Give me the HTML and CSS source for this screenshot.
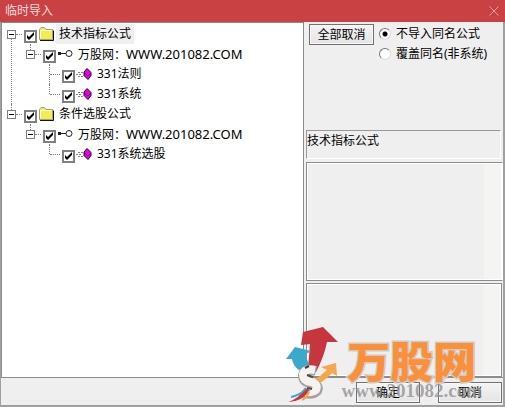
FILE: index.html
```html
<!DOCTYPE html>
<html lang="zh-CN">
<head>
  <meta charset="UTF-8">
  <title>临时导入</title>
  <link rel="stylesheet" href="styles.css">
</head>
<body>

<!-- shared icons -->
<svg class="icon-defs" aria-hidden="true">
  <symbol id="folder" viewBox="0 0 16 14">
    <path d="M1.500 12.500V2.500L3 .5h3.500l1.500 2h6.500v10z" fill="#f2ee50" stroke="#a0a084"/>
    <path d="M2.500 11V3.500H13" stroke="#fffde0" fill="none"/>
    <path d="M2 13.500h13.500V3.500" stroke="#111" fill="none"/>
  </symbol>
  <symbol id="key" viewBox="0 0 16 14">
    <path d="M1 5h3v3H1z" fill="#222"/>
    <path d="M1 6.500h8" stroke="#222"/>
    <circle cx="12" cy="6.500" r="3" fill="#fff" stroke="#222"/>
  </symbol>
  <symbol id="gem" viewBox="0 0 16 14">
    <path d="M2 5.500h5M0 7.500h6M2 9.500h5" stroke="#888" stroke-dasharray="2 1"/>
    <path d="M11 1.500L15 5.500V8.500L12 12.500L8 8.500V5z" fill="#e800e8" stroke="#300030"/>
    <path d="M8 6l4 3 3-3" fill="none" stroke="#600060"/>
  </symbol>
</svg>

<div class="dialog">
  <div class="title-bar">
    <span>临时导入</span>
    <button class="close" aria-label="关闭">
      <svg width="10" height="10" viewBox="0 0 10 10"><path d="M.5.5l9 9M9.500.5l-9 9" stroke="#eba5a5" fill="none"/></svg>
    </button>
  </div>

  <div class="content">
    <ul class="tree">
      <li>
        <div class="row">
          <button class="expander" aria-label="折叠"></button>
          <input type="checkbox" id="n1" checked>
          <svg class="icon"><use href="#folder"/></svg>
          <label for="n1" class="selected">技术指标公式</label>
        </div>
        <ul>
          <li>
            <div class="row">
              <button class="expander" aria-label="折叠"></button>
              <input type="checkbox" id="n2" checked>
              <svg class="icon"><use href="#key"/></svg>
              <label for="n2">万股网：<span class="url">WWW.201082.COM</span></label>
            </div>
            <ul>
              <li>
                <div class="row leaf">
                  <input type="checkbox" id="n3" checked>
                  <svg class="icon"><use href="#gem"/></svg>
                  <label for="n3">331法则</label>
                </div>
              </li>
              <li>
                <div class="row leaf">
                  <input type="checkbox" id="n4" checked>
                  <svg class="icon"><use href="#gem"/></svg>
                  <label for="n4">331系统</label>
                </div>
              </li>
            </ul>
          </li>
        </ul>
      </li>
      <li>
        <div class="row">
          <button class="expander" aria-label="折叠"></button>
          <input type="checkbox" id="n5" checked>
          <svg class="icon"><use href="#folder"/></svg>
          <label for="n5">条件选股公式</label>
        </div>
        <ul>
          <li>
            <div class="row">
              <button class="expander" aria-label="折叠"></button>
              <input type="checkbox" id="n6" checked>
              <svg class="icon"><use href="#key"/></svg>
              <label for="n6">万股网：<span class="url">WWW.201082.COM</span></label>
            </div>
            <ul>
              <li>
                <div class="row leaf">
                  <input type="checkbox" id="n7" checked>
                  <svg class="icon"><use href="#gem"/></svg>
                  <label for="n7">331系统选股</label>
                </div>
              </li>
            </ul>
          </li>
        </ul>
      </li>
    </ul>

    <div class="side">
      <div class="options">
        <button class="btn">全部取消</button>
        <div class="radios">
          <div class="radio"><input type="radio" name="mode" id="skip" checked><label for="skip">不导入同名公式</label></div>
          <div class="radio"><input type="radio" name="mode" id="cover"><label for="cover">覆盖同名(非系统)</label></div>
        </div>
      </div>
      <div class="caption">技术指标公式</div>
      <div class="pane pane-top"></div>
      <div class="pane"></div>
    </div>
  </div>

  <div class="footer">
    <button class="btn">确定</button>
    <button class="btn">取消</button>
  </div>

  <div class="watermark">
    <svg width="56" height="80" viewBox="0 0 56 80">
      <path d="M17 7L37 2L52 17L41 17Q38 32 30 47L22 45L24 19L15 20z" fill="#c5363f"/>
      <path d="M0 34L9 22L25 26L20 29Q21 37 25 42L13 45Q7 41 6 34z" fill="#3aa9cc"/>
      <path d="M27 55Q35 51 41 45L35 42L50 38L51 51L46 48Q38 57 29 60z" fill="#f7a64d"/>
      <path d="M30 46Q19 43 17 50Q17 57 25 58Q34 60 31 66Q26 71 15 67" fill="none" stroke="#a79f99" stroke-width="10"/>
      <path d="M29 45Q19 43 17 49Q17 56 25 57Q33 59 30 65Q25 69 15 66" fill="none" stroke="#f5f2ef" stroke-width="8"/>
      <path d="M19 43l4-2" stroke="#453c3c" stroke-width="2"/>
      <path d="M21 50l6 2M21 63l5 1" stroke="#55494a" stroke-width="2"/>
      <path d="M2 77Q14 73 19 63L24 65Q16 77 2 77z" fill="#c5363f"/>
      <path d="M5 72Q15 70 20 63" fill="none" stroke="#3aa9cc" stroke-width="2"/>
      <path d="M16 75Q22 72 23 66" fill="none" stroke="#f7a64d" stroke-width="2"/>
    </svg>
    <div class="brand">
      <span class="brand-name">万股网</span>
      <span class="brand-url">www.201082.com</span>
    </div>
  </div>
</div>

</body>
</html>
```
FILE: styles.css
```css
* {
  box-sizing: border-box;
}
body {
  margin: 0;
  font-family: "Noto Sans", "Noto Sans CJK SC", sans-serif;
  font-size: 12px;
  line-height: 20px;
  color: #000;
}
button, input {
  font: inherit;
  color: inherit;
  margin: 0;
  padding: 0;
}
ul {
  list-style: none;
  margin: 0;
  padding: 0;
}
.icon-defs {
  display: none;
}
.dialog {
  position: relative;
  display: flex;
  flex-direction: column;
  min-height: 100vh;
  background: #efefef;
  border: solid #a0a0a0;
  border-width: 0 2px 2px 1px;
}
.title-bar {
  display: flex;
  justify-content: space-between;
  align-items: center;
  height: 22px;
  margin: 0 -2px 0 -1px;
  padding: 0 6px 0 5px;
  background: #ca4144;
  color: #f4dada;
}
.close {
  display: flex;
  border: none;
  background: none;
}
.content {
  display: flex;
  flex: 1;
}

/* tree */
.tree {
  flex: 1;
  padding: 1px 0 0 5px;
  background: #fff;
  border: 1px solid #8c8c8c;
}
.tree li {
  position: relative;
}
.tree ul {
  padding-left: 19px;
}
.tree li::before {
  content: "";
  position: absolute;
  left: 4px;
  top: 0;
  height: 100%;
  border-left: 1px dotted #808080;
}
.tree li:last-child::before {
  height: 10px;
}
.tree > li:first-child::before {
  top: 10px;
}
.row {
  position: relative;
  display: flex;
  align-items: center;
  height: 20px;
}
.row::before {
  content: "";
  order: 1;
  width: 6px;
  margin-right: 2px;
  border-top: 1px dotted #808080;
}
.leaf::before {
  width: 10px;
  margin-left: 5px;
}
.row > * {
  order: 2;
}
.row .expander {
  order: 0;
  width: 9px;
  height: 9px;
  border: 1px solid #808080;
  background: linear-gradient(#000, #000) center / 5px 1px no-repeat #fff;
}
.row input {
  appearance: none;
  width: 13px;
  height: 13px;
  margin: 5px 1px 0 0;
  border: 2px solid #808080;
  background: #fff;
}
.row input:checked::before {
  content: "";
  display: block;
  width: 9px;
  height: 9px;
  background: #000;
  clip-path: polygon(1px 3px, 3px 5px, 8px 0, 8px 3px, 3px 8px, 1px 6px);
}
.icon {
  width: 16px;
  height: 14px;
}
.row label {
  margin-left: 2px;
  padding: 0 3px;
}
.url {
  font-size: 13px;
}
.selected {
  background: #efefef;
}

/* right side */
.side {
  display: flex;
  flex-direction: column;
  width: 199px;
  padding-left: 2px;
  border-bottom: 1px solid #8c8c8c;
}
.options {
  display: flex;
  gap: 5px;
  height: 108px;
  padding: 2px 0 0 3px;
}
.btn {
  width: 65px;
  height: 21px;
  line-height: 17px;
  border: 1px solid #707070;
  box-shadow: inset 0 0 0 1px #f8f8f8;
  background: linear-gradient(#f4f4f4, #e4e4e4);
}
.radio {
  display: flex;
  align-items: center;
  gap: 5px;
}
.radio input {
  appearance: none;
  width: 12px;
  height: 12px;
  border: 1px solid;
  border-color: #777 #ddd #ddd #777;
  border-radius: 50%;
  background: #fff;
}
.radio input:checked {
  background: radial-gradient(circle, #000 2px, #fff 3px);
}
.caption {
  height: 29px;
  margin-right: 2px;
  border: 1px solid;
  border-color: #999 #fff #fff #999;
}
.pane {
  flex: 1;
  margin: 1px 1px 0 0;
  border: 1px solid #8c8c8c;
  box-shadow: inset 0 0 0 1px #fff;
  background: linear-gradient(#f4f4f2, #f4f4f2) right / 18px 100% no-repeat #efefef;
}
.pane-top {
  flex: none;
  height: 119px;
  margin: 3px 0 1px;
  border-right-color: #fff;
}

.footer {
  display: flex;
  justify-content: flex-end;
  gap: 18px;
  height: 27px;
  padding: 4px 1px 0 0;
}
.footer .btn {
  width: 64px;
}

/* site logo over the lower right corner */
.watermark {
  position: absolute;
  right: 21px;
  bottom: 0;
  display: flex;
  pointer-events: none;
}
.brand {
  display: flex;
  flex-direction: column;
  align-items: center;
  padding-top: 12px;
}
.brand-name {
  font-family: "Noto Sans CJK SC", sans-serif;
  font-size: 43px;
  line-height: 44px;
  font-weight: 900;
  color: #fb903b;
  -webkit-text-stroke: 3px #cfcac5;
  paint-order: stroke fill;
}
.brand-url {
  font-family: "Liberation Serif", serif;
  font-size: 19px;
  line-height: 20px;
  font-weight: bold;
  color: rgba(145, 145, 145, 0.8);
}
```
